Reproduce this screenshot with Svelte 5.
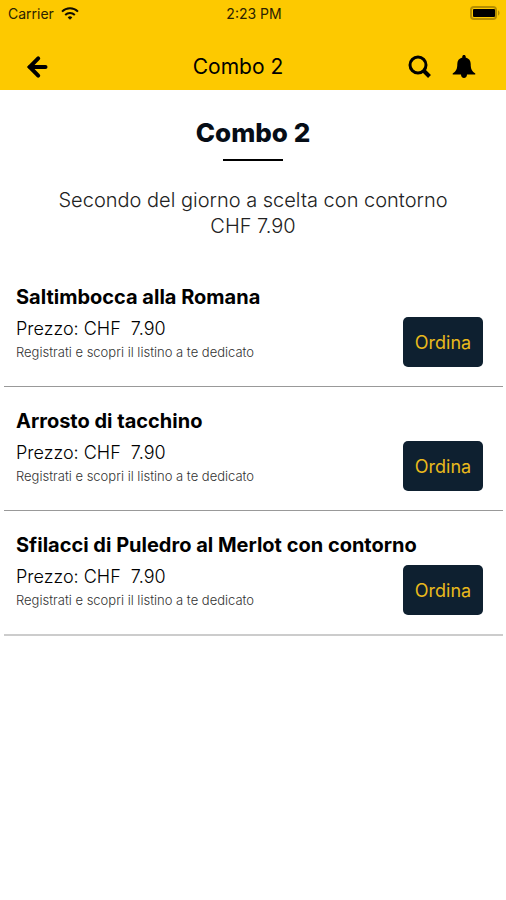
<script lang="ts">
type Dish = { id: number; name: string; price: string };

const title = "Combo 2";
const note = "Registrati e scopri il listino a te dedicato";

const dishes: Dish[] = [
  { id: 1, name: "Saltimbocca alla Romana", price: "7.90" },
  { id: 2, name: "Arrosto di tacchino", price: "7.90" },
  { id: 3, name: "Sfilacci di Puledro al Merlot con contorno", price: "7.90" },
];

let ordered = $state<number[]>([]);

function order(id: number) {
  ordered.push(id);
}
</script>

<header>
  <div class="status">
    <div class="carrier">
      <span>Carrier</span>
      <svg width="18" height="13" viewBox="0 0 18 13" fill="none" stroke="#110d00" stroke-width="2" aria-hidden="true">
        <path d="M1 4.6a11.5 11.5 0 0 1 16 0" />
        <path d="M4.2 7.9a7 7 0 0 1 9.6 0" />
        <path d="M9 12.8l-2.3-2.4a3.3 3.3 0 0 1 4.6 0z" fill="#110d00" stroke="none" />
      </svg>
    </div>
    <time>2:23 PM</time>
    <svg class="battery" width="30" height="14" viewBox="0 0 30 14" aria-hidden="true">
      <rect x="1" y="1" width="25" height="12" rx="3" fill="none" stroke="#b58f00" stroke-width="2" />
      <path d="M28 4.5c2 .6 2 4.4 0 5z" fill="#b58f00" />
      <rect x="3" y="3" width="22" height="8" rx="1" fill="#000" />
    </svg>
  </div>
  <nav>
    <button class="icon back" aria-label="Indietro">
      <svg width="22" height="24" viewBox="0 0 22 24" fill="none" stroke="#000" stroke-width="4" aria-hidden="true">
        <path d="M12.2 3.4L3.7 12l8.500 8.600" stroke-linecap="round" />
        <path d="M4 12h15.500" stroke-linecap="round" />
      </svg>
    </button>
    <span class="nav-title">{title}</span>
    <div class="actions">
      <button class="icon" aria-label="Cerca">
        <svg width="24" height="24" viewBox="0 0 24 24" fill="none" stroke="#000" aria-hidden="true">
          <circle cx="10" cy="10" r="8" stroke-width="3" />
          <path d="M16 16l5.5 5.5" stroke-width="4" />
        </svg>
      </button>
      <button class="icon" aria-label="Notifiche">
        <svg width="24" height="26" viewBox="0 0 24 26" aria-hidden="true">
          <path d="M12 1c1 0 1.7.7 1.7 1.6v.8c3.3.8 5 3.3 5 6.6 0 5 1.300 7.500 4.300 9.200.7.5.5 1.300-.4 1.300H15c0 2-1.300 3.500-3 3.500s-3-1.500-3-3.500H1.400c-.9 0-1.100-.8-.4-1.300 3-1.700 4.300-4.200 4.300-9.200 0-3.300 1.700-5.800 5-6.600v-.8C10.300 1.700 11 1 12 1z" />
        </svg>
      </button>
    </div>
  </nav>
</header>

<main>
  <section class="intro">
    <h1>{title}</h1>
    <p>Secondo del giorno a scelta con contorno<br />CHF 7.90</p>
  </section>

  <ul>
    {#each dishes as dish (dish.id)}
      <li>
        <h2>{dish.name}</h2>
        <div class="row">
          <div>
            <p class="price">Prezzo: CHF&nbsp; {dish.price}</p>
            <p class="note">{note}</p>
          </div>
          <button class="order" onclick={() => order(dish.id)}>Ordina</button>
        </div>
      </li>
    {/each}
  </ul>
</main>

<style>
  :global(body) {
    margin: 0;
    background: #fff;
    color: #000;
    font-family: Inter, "Liberation Sans", sans-serif;
  }
  h1, h2, p, ul {
    margin: 0;
    padding: 0;
  }
  button {
    border: 0;
    padding: 0;
    font-family: inherit;
    cursor: pointer;
  }
  header {
    background: #fdc900;
  }
  .status {
    display: grid;
    grid-template-columns: 1fr auto 1fr;
    align-items: center;
    height: 26px;
    padding: 0 6px 0 8px;
    font-size: 14px;
    color: #2b2200;
  }
  .carrier {
    display: flex;
    align-items: center;
    gap: 7px;
  }
  .battery {
    justify-self: end;
  }
  nav {
    display: grid;
    grid-template-columns: auto 1fr auto;
    align-items: center;
    height: 46px;
    padding: 18px 30px 0 26px;
  }
  .nav-title {
    font-size: 21px;
    line-height: 24px;
    text-align: center;
  }
  .icon {
    display: flex;
    background: none;
  }
  .back {
    padding-right: 20px;
  }
  .actions {
    display: flex;
    align-items: center;
    gap: 20px;
  }
  .intro {
    padding: 27px 16px 24px;
    text-align: center;
  }
  h1 {
    font-size: 26px;
    line-height: 32px;
    font-weight: 800;
    color: #060d16;
  }
  h1::after {
    content: "";
    display: block;
    width: 60px;
    height: 2px;
    margin: 10px auto 26px;
    background: #000;
  }
  .intro p {
    font-size: 20px;
    line-height: 26px;
    font-weight: 300;
    color: #222;
  }
  ul {
    margin: 0 3px 0 4px;
    list-style: none;
  }
  li {
    padding: 20px 20px 19px 12px;
    border-bottom: 1px solid #999;
  }
  li:last-child {
    border-bottom: 2px solid #ccc;
  }
  h2 {
    font-size: 20px;
    line-height: 28px;
    font-weight: 700;
  }
  .row {
    display: flex;
    align-items: flex-start;
    justify-content: space-between;
    gap: 12px;
    padding-top: 6px;
  }
  .price {
    font-size: 18px;
    line-height: 24px;
    font-weight: 300;
  }
  .note {
    font-size: 13px;
    line-height: 22px;
    font-weight: 300;
    color: #333;
  }
  .order {
    width: 80px;
    height: 50px;
    border-radius: 5px;
    background: #0e2030;
    color: #e9b91c;
    font-size: 18px;
  }
</style>
